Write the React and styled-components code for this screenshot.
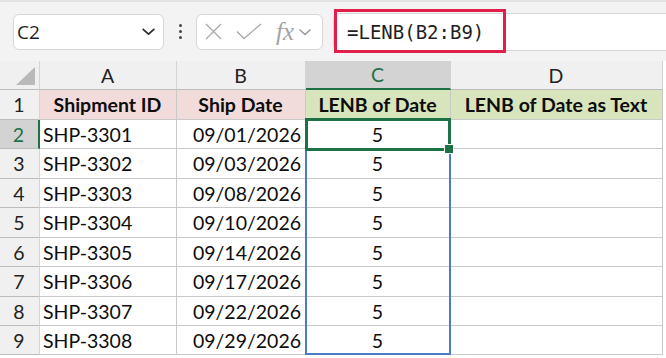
import React from "react";
import styled, { createGlobalStyle, css } from "styled-components";

const GlobalStyle = createGlobalStyle`
  html, body {
    margin: 0;
    padding: 0;
    background: #ffffff;
  }
  body {
    font-family: "Lato", "Open Sans", sans-serif;
  }
`;

const COLS = [40, 137, 129, 145, 212];
const ROW_HEIGHTS = [29, 30, 29, 30, 29, 30, 29, 30, 29, 29];

const rows = [
  ["SHP-3301", "09/01/2026", "5"],
  ["SHP-3302", "09/03/2026", "5"],
  ["SHP-3303", "09/08/2026", "5"],
  ["SHP-3304", "09/10/2026", "5"],
  ["SHP-3305", "09/14/2026", "5"],
  ["SHP-3306", "09/17/2026", "5"],
  ["SHP-3307", "09/22/2026", "5"],
  ["SHP-3308", "09/29/2026", "5"],
];

const Page = styled.div`
  width: 666px;
  height: 358px;
  overflow: hidden;
  background: #ffffff;
`;

const TopBar = styled.div`
  height: 61px;
  box-sizing: border-box;
  background: #f3f3f3;
  border-top: 2px solid #e2e2e2;
  display: flex;
  align-items: center;
  padding-left: 13px;
`;

const NameBox = styled.div`
  width: 151px;
  height: 36px;
  box-sizing: border-box;
  background: #ffffff;
  border: 1px solid #d6d6d6;
  border-radius: 6px;
  display: flex;
  align-items: center;
  justify-content: space-between;
  padding: 0 7px 0 3px;
  font-family: "Open Sans", "Liberation Sans", sans-serif;
  font-size: 19px;
  color: #1f1f1f;
`;

const Dots = styled.div`
  width: 32px;
  display: flex;
  flex-direction: column;
  align-items: center;
  gap: 3px;
  span {
    width: 3px;
    height: 3px;
    border-radius: 50%;
    background: #444;
  }
`;

const FxBox = styled.div`
  width: 127px;
  height: 36px;
  box-sizing: border-box;
  background: #ffffff;
  border: 1px solid #d6d6d6;
  border-radius: 6px;
  display: flex;
  align-items: center;
  padding-left: 8px;
  gap: 14px;
`;

const FxText = styled.span`
  font-family: "Liberation Serif", serif;
  font-style: italic;
  font-size: 25px;
  color: #a3a3a3;
  margin-right: -10px;
`;

const FormulaWrap = styled.div`
  flex: 1;
  margin-left: 10px;
  height: 36px;
  background: #ffffff;
  border: 1px solid #d6d6d6;
  border-right: none;
  border-radius: 6px 0 0 6px;
  position: relative;
  display: flex;
  align-items: center;
  padding-left: 13px;
  font-family: "DejaVu Sans Mono", "Liberation Mono", monospace;
  font-size: 19px;
  color: #1f1f1f;
`;

const Highlight = styled.div`
  position: absolute;
  left: 0;
  top: -5px;
  width: 172px;
  height: 44px;
  box-sizing: border-box;
  border: 3px solid #e0204a;
`;

const Sheet = styled.div`
  position: relative;
  display: grid;
  grid-template-columns: ${COLS.map((c) => c + "px").join(" ")};
  grid-template-rows: ${ROW_HEIGHTS.map((h) => h + "px").join(" ")};
  width: ${COLS.reduce((a, b) => a + b, 0)}px;
`;

const Cell = styled.div`
  box-sizing: border-box;
  border-right: 1px solid #c9c9c9;
  border-bottom: 1px solid #c9c9c9;
  display: flex;
  align-items: center;
  justify-content: ${(p) =>
    p.$align === "right" ? "flex-end" : p.$align === "left" ? "flex-start" : "center"};
  padding: 0 4px 0 3px;
  font-size: 19.5px;
  color: #0d0d0d;
  white-space: nowrap;
  background: ${(p) => p.$bg || "#ffffff"};
  ${(p) =>
    p.$bold &&
    css`
      font-weight: 700;
    `}
`;

const HeadCell = styled(Cell)`
  background: ${(p) => (p.$active ? "#d3d3d3" : "#f0f0f0")};
  color: ${(p) => (p.$active ? "#1e7145" : "#222")};
  font-weight: 400;
  border-right-color: #d4d4d4;
  border-bottom-color: #bcbcbc;
  ${(p) =>
    p.$col &&
    p.$active &&
    css`
      border-bottom: 2px solid #1e7145;
    `}
  ${(p) =>
    p.$row &&
    p.$active &&
    css`
      border-right: 2px solid #1e7145;
    `}
`;

const Corner = styled(HeadCell)`
  align-items: flex-end;
  justify-content: flex-end;
  padding: 0 4px 4px 0;
`;

const SpillBox = styled.div`
  position: absolute;
  left: ${COLS[0] + COLS[1] + COLS[2] - 1}px;
  top: 58px;
  width: ${COLS[3] + 1}px;
  height: 236px;
  box-sizing: border-box;
  border: 2px solid #4a7ccc;
  pointer-events: none;
`;

const ActiveBox = styled.div`
  position: absolute;
  left: ${COLS[0] + COLS[1] + COLS[2] - 1}px;
  top: 57px;
  width: ${COLS[3] + 1}px;
  height: 33px;
  box-sizing: border-box;
  border: 3px solid #1e7145;
  pointer-events: none;
  &::after {
    content: "";
    position: absolute;
    right: -6px;
    bottom: -6px;
    width: 8px;
    height: 8px;
    background: #1e7145;
    border: 1px solid #ffffff;
  }
`;

const Chevron = ({ color = "#333", size = 14 }) => (
  <svg width={size} height={size} viewBox="0 0 14 14" fill="none">
    <path d="M2 5l5 4.5L12 5" stroke={color} strokeWidth="1.6" strokeLinecap="round" strokeLinejoin="round" />
  </svg>
);

export default function App() {
  return (
    <Page>
      <GlobalStyle />
      <TopBar>
        <NameBox>
          <span>C2</span>
          <Chevron color="#2b2b2b" size={15} />
        </NameBox>
        <Dots>
          <span />
          <span />
          <span />
        </Dots>
        <FxBox>
          <svg width="17" height="17" viewBox="0 0 17 17">
            <path d="M1 1l15 15M16 1L1 16" stroke="#a8a8a8" strokeWidth="1.3" />
          </svg>
          <svg width="26" height="17" viewBox="0 0 26 17">
            <path d="M1 8.5l7 7L25 1" stroke="#a8a8a8" strokeWidth="1.3" fill="none" />
          </svg>
          <FxText>fx</FxText>
          <Chevron color="#9a9a9a" size={14} />
        </FxBox>
        <FormulaWrap>
          <Highlight />
          =LENB(B2:B9)
        </FormulaWrap>
      </TopBar>
      <Sheet>
        <Corner>
          <svg width="19" height="18" viewBox="0 0 19 18">
            <polygon points="19,0 19,18 0,18" fill="#b9b9b9" />
          </svg>
        </Corner>
        <HeadCell $col>A</HeadCell>
        <HeadCell $col>B</HeadCell>
        <HeadCell $col $active>C</HeadCell>
        <HeadCell $col>D</HeadCell>

        <HeadCell $row>1</HeadCell>
        <Cell $bold $bg="#f2dcdb">Shipment ID</Cell>
        <Cell $bold $bg="#f2dcdb">Ship Date</Cell>
        <Cell $bold $bg="#d8e4bc">LENB of Date</Cell>
        <Cell $bold $bg="#d8e4bc">LENB of Date as Text</Cell>

        {rows.map(([id, date, len], i) => (
          <React.Fragment key={id}>
            <HeadCell $row $active={i === 0}>{i + 2}</HeadCell>
            <Cell $align="left">{id}</Cell>
            <Cell $align="right">{date}</Cell>
            <Cell>{len}</Cell>
            <Cell />
          </React.Fragment>
        ))}
        <SpillBox />
        <ActiveBox />
      </Sheet>
    </Page>
  );
}
